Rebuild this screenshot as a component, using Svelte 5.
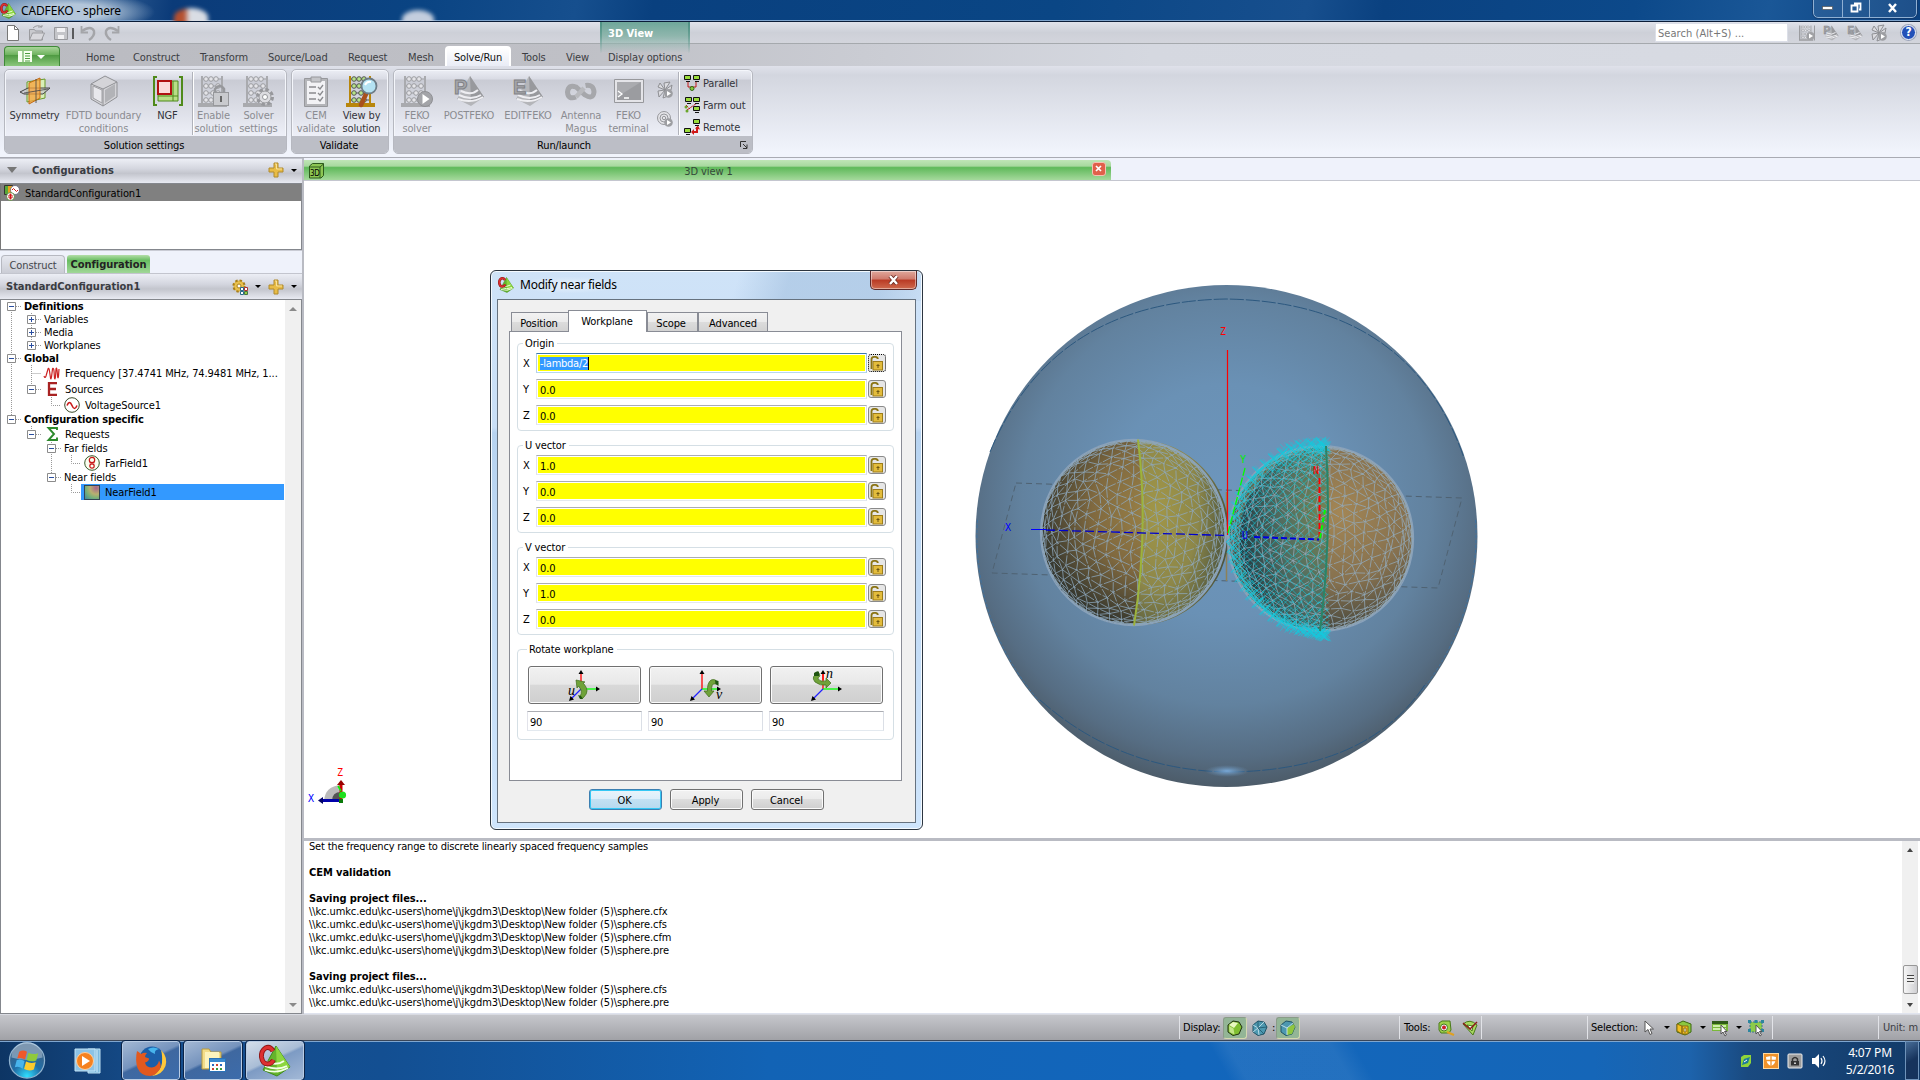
<script>
  const tabsLeft = ['Home', 'Construct', 'Transform', 'Source/Load', 'Request', 'Mesh'];
  const tabsRight = ['Tools', 'View', 'Display options'];

  const tree = [
    { t: 'Definitions', l: 0, b: true, e: '-' },
    { t: 'Variables', l: 1, e: '+' },
    { t: 'Media', l: 1, e: '+' },
    { t: 'Workplanes', l: 1, e: '+' },
    { t: 'Global', l: 0, b: true, e: '-' },
    { t: 'Frequency [37.4741 MHz, 74.9481 MHz, 1...', l: 1, i: 'freq' },
    { t: 'Sources', l: 1, e: '-', i: 'e' },
    { t: 'VoltageSource1', l: 2, i: 'volt' },
    { t: 'Configuration specific', l: 0, b: true, e: '-' },
    { t: 'Requests', l: 1, e: '-', i: 'sigma' },
    { t: 'Far fields', l: 2, e: '-' },
    { t: 'FarField1', l: 3, i: 'far' },
    { t: 'Near fields', l: 2, e: '-' },
    { t: 'NearField1', l: 3, i: 'near', sel: true }
  ];

  const groups = [
    { title: 'Origin', rows: [['X', '-lambda/2'], ['Y', '0.0'], ['Z', '0.0']] },
    { title: 'U vector', rows: [['X', '1.0'], ['Y', '0.0'], ['Z', '0.0']] },
    { title: 'V vector', rows: [['X', '0.0'], ['Y', '1.0'], ['Z', '0.0']] }
  ];

  const dir = '\\\\kc.umkc.edu\\kc-users\\home\\j\\jkgdm3\\Desktop\\New folder (5)\\sphere.';
  const log = [
    ['Set the frequency range to discrete linearly spaced frequency samples', 0],
    ['', 0],
    ['CEM validation', 1],
    ['', 0],
    ['Saving project files...', 1],
    [dir + 'cfx', 0],
    [dir + 'cfs', 0],
    [dir + 'cfm', 0],
    [dir + 'pre', 0],
    ['', 0],
    ['Saving project files...', 1],
    [dir + 'cfs', 0],
    [dir + 'pre', 0]
  ];

  // Geodesic wireframe: an icosahedron subdivided three times, front side only.
  function geodesic(cx, cy, r) {
    const p = (1 + Math.sqrt(5)) / 2;
    const unit = (v) => {
      const n = Math.hypot(v[0], v[1], v[2]);
      return [v[0] / n, v[1] / n, v[2] / n];
    };
    const V = [
      [-1, p, 0], [1, p, 0], [-1, -p, 0], [1, -p, 0], [0, -1, p], [0, 1, p],
      [0, -1, -p], [0, 1, -p], [p, 0, -1], [p, 0, 1], [-p, 0, -1], [-p, 0, 1]
    ].map(unit);
    let F = [
      [0, 11, 5], [0, 5, 1], [0, 1, 7], [0, 7, 10], [0, 10, 11], [1, 5, 9], [5, 11, 4], [11, 10, 2], [10, 7, 6], [7, 1, 8],
      [3, 9, 4], [3, 4, 2], [3, 2, 6], [3, 6, 8], [3, 8, 9], [4, 9, 5], [2, 4, 11], [6, 2, 10], [8, 6, 7], [9, 8, 1]
    ].map((f) => f.map((i) => V[i]));
    for (let s = 0; s < 3; s++) {
      const next = [];
      for (const [a, b, c] of F) {
        const m = (u, v) => unit([u[0] + v[0], u[1] + v[1], u[2] + v[2]]);
        const ab = m(a, b), bc = m(b, c), ca = m(c, a);
        next.push([a, ab, ca], [b, bc, ab], [c, ca, bc], [ab, bc, ca]);
      }
      F = next;
    }
    const turn = ([x, y, z]) => {
      const jx = 0.035 * Math.sin(41 * x + 17 * z + 9 * y), jy = 0.035 * Math.sin(37 * y + 23 * x);
      const x1 = x * Math.cos(0.4) + z * Math.sin(0.4), z1 = z * Math.cos(0.4) - x * Math.sin(0.4);
      const y2 = y * Math.cos(0.3) - z1 * Math.sin(0.3), z2 = z1 * Math.cos(0.3) + y * Math.sin(0.3);
      const k = Math.max(0, z2);
      return [x1 + jx * k, y2 + jy * k, z2];
    };
    let d = '';
    const seen = new Set();
    for (const f of F) {
      const q = f.map(turn);
      for (let i = 0; i < 3; i++) {
        const a = q[i], b = q[(i + 1) % 3];
        if (a[2] + b[2] < -0.35) continue;
        const A = `${(cx + a[0] * r).toFixed(1)} ${(cy + a[1] * r).toFixed(1)}`;
        const B = `${(cx + b[0] * r).toFixed(1)} ${(cy + b[1] * r).toFixed(1)}`;
        const key = A < B ? A + B : B + A;
        if (seen.has(key)) continue;
        seen.add(key);
        d += `M${A}L${B}`;
      }
    }
    return d;
  }

  // Near-field sample points: small diagonal crosses over one half sphere.
  function samples(cx, cy, r) {
    let d = '';
    for (let th = 3; th < 179; th += 6.2) {
      const t = (th * Math.PI) / 180;
      const step = Math.sin(t) > 0.4 ? 7.5 : 10;
      for (let ph = 2; ph <= 110; ph += step) {
        const q = (ph * Math.PI) / 180;
        const x = cx - r * Math.sin(t) * Math.sin(q);
        const y = cy - r * Math.cos(t) + 4 * Math.cos(q);
        d += `M${(x - 5).toFixed(1)} ${(y - 5).toFixed(1)}l10 10m0-10l-10 10`;
      }
    }
    // the pole caps lean away from the dividing plane
    for (const [y0, s] of [[cy - r - 1, 1], [cy + r + 1, -1]]) {
      for (let k = 0; k < 10; k++) {
        const x = cx - 42 + k * 4.6;
        const y = y0 + s * (Math.pow(Math.max(0, cx - x - 8) / 42, 2) * 10);
        d += `M${(x - 4).toFixed(1)} ${(y - 4).toFixed(1)}l8 8m0-8l-8 8`;
      }
    }
    return d;
  }

  const meshL = geodesic(1133.5, 532.5, 92.5);
  const meshR = geodesic(1320.5, 538.5, 92.5);
  const field = samples(1326, 537.5, 95);
</script>

{#snippet abacus(gold)}
  <g fill="none" stroke={gold ? '#b8860b' : '#a9aaae'} stroke-width="2">
    <path d="M4 1v27M24 1v27M1 29h27v2H1z" />
  </g>
  <g stroke={gold ? '#555' : '#9b9ca0'} fill={gold ? '#b6e388' : '#e4e4e8'}>
    <path d="M5 4h18M5 11h18M5 18h18M5 25h18" />
    <circle cx="8" cy="4" r="2.3" /><circle cx="13" cy="4" r="2.3" /><circle cx="18" cy="4" r="2.3" />
    <circle cx="8" cy="11" r="2.3" /><circle cx="13" cy="11" r="2.3" /><circle cx="20" cy="11" r="2.3" />
    <circle cx="8" cy="18" r="2.3" /><circle cx="15" cy="18" r="2.3" /><circle cx="20" cy="18" r="2.3" />
    <circle cx="8" cy="25" r="2.3" /><circle cx="13" cy="25" r="2.3" /><circle cx="18" cy="25" r="2.3" />
  </g>
{/snippet}

{#snippet pyramid(letter)}
  <path d="M17 1L31 22 18 31 4 24z" fill="#b4b5b9" />
  <path d="M17 1L31 22 18 27z" fill="#98999d" />
  <path d="M8 16q10 5 17-1M6 20q12 6 22 0M5 24q13 5 25-2" stroke="#eeeef2" stroke-width="2" fill="none" />
  <text x="1" y="18.500" font-size="20" font-weight="bold" font-family="Liberation Sans, sans-serif" fill="#a6a7ab" stroke="#808185">{letter}</text>
{/snippet}

{#snippet logo(cls)}
  <svg class={cls} viewBox="0 0 32 32">
    <path d="M17 1L31 22 18 31 4 25z" fill="#64b32c" stroke="#3f8a1a" />
    <path d="M17 1L31 22 18 28z" fill="#8cd63f" />
    <path d="M8 17q10 4 17-1M6 21q12 5 22 0M6 25q12 4 23-2" stroke="#f4ffe8" stroke-width="1.8" fill="none" />
    <path d="M14 6Q11 1 6.500 3Q2 6 2.500 12q1 7 6 7 4 0 6-4" fill="none" stroke="#8d1414" stroke-width="5" />
    <path d="M14 6Q11 1 6.500 3Q2 6 2.500 12q1 7 6 7 4 0 6-4" fill="none" stroke="#dc3030" stroke-width="3.200" />
  </svg>
{/snippet}

{#snippet fan()}
  <path d="M8 8L1 5l2-4zM8 8l-1-7 6-1zM8 8L1 9l1 6zM8 8l-2 8 5-2zM8 8l7-5-1 5z" fill="#dcdce0" stroke="#8e8f93" />
  <circle cx="11.500" cy="11.500" r="4.300" fill="#9d9ea2" /><path d="M10 9l4 2.500-4 2.500z" fill="#fff" />
{/snippet}

{#snippet plus()}
  <svg class="i16" viewBox="0 0 16 16"><path d="M6 1h4v5h5v4h-5v5H6v-5H1V6h5z" fill="#e8bc46" stroke="#b08a2c" /><path d="M7 2h1.500v5H14" stroke="#f9e29a" fill="none" /></svg>
{/snippet}

{#snippet computer(x, y)}
  <g transform="translate({x} {y})"><path d="M.5.500h6v4h-6z" fill="#9bdc3c" stroke="#111" /><path d="M2 6.500h4" stroke="#111" /></g>
{/snippet}

{#snippet lock()}
  <svg class="lock" viewBox="0 0 16 16">
    <path d="M2.500 14V4.500Q2.500 1.800 5 1.800h1.500Q8.800 2 8.800 4" fill="none" stroke="#8b7414" stroke-width="1.800" />
    <rect x="4" y="6.500" width="9.500" height="8.500" fill="#e3bc3c" stroke="#9c7c1a" /><path d="M9 9v4M7.500 10.500h3" stroke="#6d5610" />
  </svg>
{/snippet}

{#snippet rotator(which)}
  <svg class="rot" viewBox="0 0 34 34">
    <path d="M15 21V5" stroke="#f00" stroke-width="1.300" /><path d="M15 21H30" stroke="#0f0" stroke-width="1.300" /><path d="M15 21L5 31" stroke="#22f" stroke-width="1.300" />
    <path d="M12.500 6L15 2l2.500 4zM30 18.500l4 2.500-4 2.500zM3 33l1.500-5 3.500 3.500z" fill="#000" />
    {#if which === 'u'}
      <path d="M14 30q2 2 4-1 6-6 0-13l-1-1 2-1-9-2 1 8 1.500-2q5 6 1.500 10z" fill="#6fa23a" stroke="#3d6b1a" stroke-width=".7" />
      <path d="M12 27l3 1 2 3h-3z" fill="#1f5411" />
      <text x="2" y="27">u</text>
    {:else if which === 'v'}
      <path d="M31 16q-2-6-7-4-4 3-3.500 11H17l5 6 5-6h-2.500q0-8 3-7z" fill="#6fa23a" stroke="#3d6b1a" stroke-width=".7" />
      <path d="M28 12l3.500 1v5l-3-2z" fill="#1f5411" />
      <text x="29" y="31">v</text>
    {:else}
      <path d="M11 5Q2 8 7 14q5 4 11 3v3l5-5-5-5v3q-6 1-8-2 0-2 2-3z" fill="#6fa23a" stroke="#3d6b1a" stroke-width=".7" />
      <path d="M6 5q4-3 5-1v4H6z" fill="#1f5411" />
      <path d="M15 12V6" stroke="#f00" stroke-width="1.300" />
      <text x="18" y="10">n</text>
    {/if}
  </svg>
{/snippet}

<div class="screen">
  <div class="title">
    {@render logo('i16')}
    <span>CADFEKO - sphere</span>
    <i class="smudge one"></i><i class="smudge two"></i>
    <div class="winbtns">
      <b><svg width="12" height="6"><rect x=".5" y="1.500" width="10" height="3" fill="#fff" stroke="#555" stroke-width=".7" /></svg></b>
      <b><svg width="12" height="12"><path d="M4 1.500h6.500v6H9M1.500 3.500h6v6h-6z" fill="none" stroke="#fff" stroke-width="1.800" /></svg></b>
      <b class="x"><svg width="12" height="10"><path d="M2 1l7 8M9 1L2 9" stroke="#fff" stroke-width="2.400" /></svg></b>
    </div>
  </div>

  <div class="qat">
    <svg class="qicons" viewBox="0 0 122 20">
      <path d="M7.500 2.500h7l4 4v11h-11z" fill="#fff" stroke="#777" /><path d="M14.500 2.500v4h4" fill="none" stroke="#777" />
      <path d="M29.500 17V6.500h5l1 1.500h7v9z" fill="#c9cace" stroke="#9a9b9f" /><path d="M29.500 17l3-7h12l-3 7zM33 5q4-4 9-1v-2M42 4h-4" fill="#d8d8dc" stroke="#9a9b9f" />
      <path d="M54.500 4.500h13v12h-13z" fill="#c4c5c9" stroke="#98999d" /><path d="M57 5h8v4h-8zM58 12h6v4h-6z" fill="#f2f2f4" />
      <path d="M73 5v11" stroke="#333" stroke-width="1.500" />
      <path d="M82 8q9-6 12 0 1 5-5 9" fill="none" stroke="#a4a5a9" stroke-width="2.400" /><path d="M81.500 3v6.500h6.500" fill="none" stroke="#a4a5a9" stroke-width="1.800" />
      <path d="M118 8q-9-6-12 0-1 5 5 9" fill="none" stroke="#a4a5a9" stroke-width="2.400" /><path d="M118.500 3v6.500h-6.500" fill="none" stroke="#a4a5a9" stroke-width="1.800" />
    </svg>
    <div class="ctx">3D View</div>
    <div class="search">Search (Alt+S) ...</div>
    <div class="qright">
      <svg class="i16" viewBox="0 0 32 32">{@render abacus(false)}<path d="M1 1v30M31 1v30" stroke="#9b9ca0" stroke-width="2" /><circle cx="23" cy="22" r="8" fill="#a0a1a5" /><path d="M20 17l8 5-8 5z" fill="#fff" /></svg>
      <svg class="i16" viewBox="0 0 32 32">{@render pyramid('P')}</svg>
      <svg class="i16" viewBox="0 0 32 32">{@render pyramid('E')}</svg>
      <svg class="i16" viewBox="0 0 16 16">{@render fan()}</svg>
      <div class="help">?</div>
    </div>
  </div>

  <nav>
    <div class="file">
      <svg width="28" height="12" viewBox="0 0 28 12"><path d="M0 0h14v11H0z" fill="#f6fff0" /><path d="M5 0v11M7 2.500h5M7 5h5M7 7.500h5M7 10h5" stroke="#4d9b3f" /><path d="M19 4h8l-4 4z" fill="#fff" /></svg>
    </div>
    {#each tabsLeft as t}<span>{t}</span>{/each}
    <span class="active">Solve/Run</span>
    {#each tabsRight as t}<span>{t}</span>{/each}
  </nav>

  <div class="ribbon">
    <section class="g1">
      <div class="tools">
        <div class="tool on">
          <svg viewBox="0 0 32 32"><path d="M8 7l18-3v19L8 27z" fill="#d9efb8" stroke="#6a9a2a" /><path d="M1 17l8-4h22l-7 6H5z" fill="#c8c8cc" fill-opacity=".7" stroke="#444" /><path d="M10 8l11-5v20l-11 6z" fill="#f7a23a" fill-opacity=".75" stroke="#c46a10" /><path d="M17 4v24M5 18l24-4" stroke="#444" stroke-width=".8" /></svg>
          Symmetry
        </div>
        <div class="tool">
          <svg viewBox="0 0 32 32"><path d="M3 9L17 1l12 6v15L15 31 3 24z" fill="#d4d4d8" stroke="#8f9094" /><path d="M3 9l12 5 14-7M15 14v17" fill="none" stroke="#8f9094" /><path d="M5 11l9 4v13l-9-5z" fill="#e8e8ec" stroke="#a0a0a4" /><path d="M17 15l10-6v12l-10 7z" fill="#b2b3b7" /></svg>
          FDTD boundary<br />conditions
        </div>
        <div class="tool on">
          <svg viewBox="0 0 32 32"><path d="M5 2H2v28h3M27 2h3v28h-3" fill="none" stroke="#4f8a1a" stroke-width="2" /><path d="M6 6h20v20H6z" fill="#b8dd86" stroke="#4f8a1a" /><path d="M21 6v20M6 21h20" stroke="#4f8a1a" /><path d="M6 6h13v13H6z" fill="#fbdada" stroke="#b01010" stroke-width="2" /></svg>
          NGF
        </div>
        <hr />
        <div class="tool">
          <svg viewBox="0 0 32 32">{@render abacus(false)}<path d="M17 18v-4q5-6 9 0v4" fill="none" stroke="#97989c" stroke-width="2.500" /><rect x="15.500" y="17.500" width="15" height="13" fill="#c9cace" stroke="#97989c" /><path d="M23 21v6" stroke="#666" stroke-width="2" /></svg>
          Enable<br />solution
        </div>
        <div class="tool">
          <svg viewBox="0 0 32 32">{@render abacus(false)}<circle cx="22" cy="22" r="7.500" fill="#e0e0e4" stroke="#97989c" stroke-width="3" stroke-dasharray="3.500 2.400" /><circle cx="22" cy="22" r="6" fill="#dcdce0" stroke="#97989c" /><circle cx="22" cy="22" r="2.500" fill="#fff" stroke="#97989c" /></svg>
          Solver<br />settings
        </div>
      </div>
      <footer>Solution settings</footer>
    </section>

    <section class="g2">
      <div class="tools">
        <div class="tool">
          <svg viewBox="0 0 32 32"><path d="M4.500 3.500h23v28h-23z" fill="#b4b5b9" stroke="#97989c" /><path d="M7 6h18v23H7z" fill="#f2f2f5" /><path d="M11 2h10v5H11z" fill="#c4c5c9" stroke="#97989c" /><path d="M9 12h7M9 18h7M9 24h7M18 12l2 2 3-4M18 18l2 2 3-4M18 24l2 2 3-4" fill="none" stroke="#8a8b8f" stroke-width="1.300" /></svg>
          CEM<br />validate
        </div>
        <div class="tool on">
          <svg viewBox="0 0 32 32">{@render abacus(true)}<path d="M20 19l-5 11" stroke="#a8501c" stroke-width="4.500" stroke-linecap="round" /><circle cx="23" cy="11" r="7.500" fill="#b4e2f2" stroke="#6d7c86" stroke-width="1.800" /><path d="M19 10q2-4 6-3" stroke="#fff" stroke-width="2" fill="none" /></svg>
          View by<br />solution
        </div>
      </div>
      <footer>Validate</footer>
    </section>

    <section class="g3">
      <div class="tools">
        <div class="tool">
          <svg viewBox="0 0 32 32">{@render abacus(false)}<circle cx="24" cy="24" r="7.500" fill="#a3a4a8" stroke="#8f9094" /><path d="M21.500 19l7 5-7 5z" fill="#fff" /></svg>
          FEKO<br />solver
        </div>
        <div class="tool"><svg viewBox="0 0 32 32">{@render pyramid('P')}</svg>POSTFEKO</div>
        <div class="tool"><svg viewBox="0 0 32 32">{@render pyramid('E')}</svg>EDITFEKO</div>
        <div class="tool">
          <svg viewBox="0 0 32 32"><path d="M11 22Q3 25 2.500 17q1-8 8.500-5l9 8q8 5 9-3-.5-8-8.500-6.500" fill="none" stroke="#a6a7ab" stroke-width="5" /><path d="M11 22l8-9" stroke="#b9babe" stroke-width="4.500" /></svg>
          Antenna<br />Magus
        </div>
        <div class="tool">
          <svg viewBox="0 0 32 32"><path d="M1.500 4.500h29v23h-29z" fill="#e4e4e8" stroke="#97989c" /><path d="M4 7h24v18H4z" fill="#9b9ca0" /><path d="M4 7h24L4 22z" fill="#aaabaf" /><path d="M5 16l4 3-4 3M11 23h5" fill="none" stroke="#fff" stroke-width="1.300" /></svg>
          FEKO<br />terminal
        </div>
        <div class="minis">
          <svg class="i16" viewBox="0 0 16 16">{@render fan()}</svg>
          <svg class="i16" viewBox="0 0 16 16"><circle cx="7" cy="7" r="6.500" fill="#e4e4e8" stroke="#97989c" /><circle cx="7" cy="7" r="4" fill="none" stroke="#97989c" /><circle cx="7" cy="7" r="1.700" fill="none" stroke="#97989c" /><circle cx="11.500" cy="11.500" r="4.300" fill="#9d9ea2" /><path d="M10 9l4 2.500-4 2.500z" fill="#fff" /></svg>
        </div>
        <hr />
        <div class="launch">
          <div><svg class="i16" viewBox="0 0 16 16">{@render computer(0, 0)}{@render computer(9, 0)}<path d="M4 7v5h8V7" fill="none" stroke="#c01818" /><circle cx="8" cy="13.500" r="2" fill="#8bc540" stroke="#2f6b10" /></svg>Parallel</div>
          <div><svg class="i16" viewBox="0 0 16 16"><path d="M3 13L13 6M2 8l4 4" stroke="#c01818" stroke-dasharray="3 1" />{@render computer(1, 0)}{@render computer(9, 0)}{@render computer(9, 9)}<circle cx="2" cy="10" r="1.500" fill="#6aa52a" /><circle cx="3" cy="14" r="1.500" fill="#6aa52a" /></svg>Farm out</div>
          <div><svg class="i16" viewBox="0 0 16 16">{@render computer(9, 0)}{@render computer(0, 9)}<path d="M13 8v5H9" fill="none" stroke="#d01818" stroke-width="2" /><path d="M11 9.500l3-3 2 4zM10 10v6l-3-3z" fill="#d01818" /></svg>Remote</div>
        </div>
      </div>
      <footer>Run/launch<svg class="dlg" viewBox="0 0 8 8"><path d="M.5 6V.5H6M3 3l4 4M7 3.500V7.500H3" fill="none" stroke="#333" /></svg></footer>
    </section>
  </div>

  <main>
    <aside>
      <header class="h1"><i class="down"></i><b>Configurations</b><span class="acts">{@render plus()}<i class="dd"></i></span></header>
      <div class="list">
        <div class="cfg">
          <svg class="i16" viewBox="0 0 16 16"><path d="M.5.500h8v9h-8z" fill="#e8a020" stroke="#333" /><path d="M1 1h3v8H1z" fill="#58a838" /><circle cx="11" cy="5" r="4.500" fill="#fff" stroke="#446" stroke-width=".6" /><path d="M8 5q1.500-3 3 0t3 0" fill="none" stroke="#d01818" /><circle cx="6.500" cy="11.500" r="4" fill="#fff" stroke="#4a7a2a" stroke-width=".8" /><path d="M6.500 8.500v6M5 10h3v3H5z" stroke="#d01818" fill="none" /></svg>
          <span>StandardConfiguration1</span>
        </div>
      </div>
      <div class="ptabs"><span>Construct</span><b>Configuration</b></div>
      <header class="h2"><b>StandardConfiguration1</b>
        <span class="acts">
          <svg class="i16" viewBox="0 0 16 16"><circle cx="7" cy="7" r="5.500" fill="#e2b53c" stroke="#a87f1c" stroke-width="2.200" stroke-dasharray="2.400 1.900" /><circle cx="7" cy="7" r="4.500" fill="#e8c04c" /><circle cx="7" cy="7" r="2" fill="#fff" stroke="#a87f1c" /><path d="M8.500 8.500h3v3h-3z" fill="#fff" stroke="#2a6a8a" /><path d="M12.500 8.500h3v3h-3z" fill="#fff" stroke="#b03030" /><path d="M12.500 12.500h3v3h-3z" fill="#9c4" stroke="#474" /><path d="M8.500 12.500h3v3h-3z" fill="#fff" stroke="#2a6a8a" /></svg>
          <i class="dd"></i>{@render plus()}<i class="dd"></i>
        </span>
      </header>
      <div class="tree">
        <div class="rows">
          <svg class="wires" viewBox="0 0 284 202"><path d="M11.500 6v114M16 6.500h6M31.500 13v32M36 19.500h5M36 32.500h5M36 45.500h5M16 58.500h6M31.500 65v24M31.500 73.500h9M36 89.500h5M51.500 97v8.500h9M16 119.500h6M31.500 126v8M36 134.500h5M51.500 142v35M56 148.500h5M71.500 155v8.500h9M56 177.500h5M71.500 184v8.500h9" fill="none" stroke="#999" stroke-dasharray="1 1" /></svg>
          {#each tree as r}
            <div class="row l{r.l}" class:icon={r.i} class:bold={r.b} class:noexp={!r.e}>
              {#if r.e}<svg class="exp" viewBox="0 0 9 9"><path d="M.5.500h8v8h-8z" fill="#fff" stroke="#8b8b8b" /><path d={r.e === '+' ? 'M2 4.500h5M4.500 2v5' : 'M2 4.500h5'} stroke="#2a4ea0" /></svg>{/if}
              <div class="lab" class:sel={r.sel}>
                {#if r.i === 'freq'}<svg class="i16" viewBox="0 0 16 16"><path d="M0 11q1 3 2 0l2-7q1-2 1.500 2l1 7q.5 2 1-1l1-8q1-2 1.500 2l.5 7q.5 2 1-1l.500-8q.5-2 1 1l.7 7q.5 2 .8-1l.5-7" fill="none" stroke="#c22" stroke-width="1.200" /></svg>
                {:else if r.i === 'e'}<svg class="i16" viewBox="0 0 16 16"><path d="M13 2.200H5v11.600h8M5 8h7" fill="none" stroke="#a82222" stroke-width="2.300" /></svg>
                {:else if r.i === 'volt'}<svg class="i16" viewBox="0 0 16 16"><circle cx="8" cy="8" r="7.300" fill="#fff" stroke="#3a4a2a" /><path d="M3 8.500q2.500-6 5 0t5 0" fill="none" stroke="#c81818" stroke-width="1.600" /></svg>
                {:else if r.i === 'sigma'}<svg class="i16" viewBox="0 0 16 16"><path d="M13 4V2H4.500L10 8l-5.500 6H13v-2.500" fill="none" stroke="#2c8a2c" stroke-width="1.900" /></svg>
                {:else if r.i === 'far'}<svg class="i16" viewBox="0 0 16 16"><circle cx="8" cy="8" r="7.300" fill="#fbfff0" stroke="#3a5a2a" /><circle cx="8" cy="5" r="2.700" fill="none" stroke="#c81818" stroke-width="1.200" /><circle cx="8" cy="11" r="2.200" fill="none" stroke="#c81818" stroke-width="1.200" /><path d="M5.500 7.800h5" stroke="#c81818" /></svg>
                {:else if r.i === 'near'}<i class="nf"></i>{/if}
                <span>{r.t}</span>
              </div>
            </div>
          {/each}
        </div>
        <div class="sb"><i class="up"></i><i class="dn"></i></div>
      </div>
    </aside>

    <div class="right">
      <div class="vtabrow">
        <div class="vtab">
          <svg class="i3d" viewBox="0 0 17 17"><path d="M1.500 4l3-2.500h11v12L13 16H1.500z" fill="#8cc653" stroke="#2d5a1d" /><path d="M1.500 5H12v11M12 5l3.500-3" fill="none" stroke="#2d5a1d" /><text x="2" y="14" font-size="8">3D</text></svg>
          <span>3D view 1</span>
          <em><svg width="9" height="9"><path d="M2 2l5 5M7 2L2 7" stroke="#fff" stroke-width="1.700" /></svg></em>
        </div>
      </div>

      <svg class="view" viewBox="304 181 1616 657">
        <defs>
          <radialGradient id="big" cx=".5" cy=".43" r=".58"><stop offset="0" stop-color="#6d96bd" /><stop offset=".4" stop-color="#6a91b5" /><stop offset=".7" stop-color="#62829f" /><stop offset=".88" stop-color="#566d83" /><stop offset="1" stop-color="#4b5965" /></radialGradient>
          <radialGradient id="sl" cx=".62" cy=".38" r=".68"><stop offset="0" stop-color="#9c8347" /><stop offset=".5" stop-color="#80693f" /><stop offset="1" stop-color="#2b302c" /></radialGradient>
          <radialGradient id="sy" cx=".25" cy=".38" r=".85"><stop offset="0" stop-color="#a19648" /><stop offset=".5" stop-color="#8d8749" /><stop offset="1" stop-color="#39453a" /></radialGradient>
          <radialGradient id="sr" cx=".6" cy=".36" r=".68"><stop offset="0" stop-color="#a38655" /><stop offset=".55" stop-color="#86714f" /><stop offset="1" stop-color="#3d423c" /></radialGradient>
          <radialGradient id="st" cx=".95" cy=".35" r=".95"><stop offset="0" stop-color="#738254" /><stop offset=".5" stop-color="#526d60" /><stop offset="1" stop-color="#253d45" /></radialGradient>
          <radialGradient id="spot"><stop offset="0" stop-color="#79a9d8" /><stop offset="1" stop-color="#6a90b5" stop-opacity="0" /></radialGradient>
        </defs>
        <circle cx="1226.500" cy="536" r="251" fill="url(#big)" />
        <path d="M977.500 520A249.500 249.500 0 0 0 1040 702M1475.500 520A249.500 249.500 0 0 1 1420 693" fill="none" stroke="#3d73a3" stroke-dasharray="3 2" />
        <path d="M990 452Q1052 302 1226 299Q1410 302 1464 458M1040 700Q1120 771 1230 772Q1370 770 1426 683" fill="none" stroke="#2c587f" stroke-dasharray="14 2" />
        <ellipse cx="1227" cy="771" rx="22" ry="6" fill="url(#spot)" />
        <path d="M1016 483L1462 498 1438 588 992 573z" fill="none" stroke="#4f6272" stroke-dasharray="6 4" />
        <path d="M1226.500 492V581" stroke="#8d8159" stroke-width="1.500" />

        <circle cx="1133.500" cy="532.500" r="93" fill="url(#sl)" />
        <path d="M1138 439.500Q1149 530 1134 625.500A93 93 0 0 0 1138 439.500z" fill="url(#sy)" />
        <path d={meshL} fill="none" stroke="#8ea8bd" stroke-width=".9" stroke-dasharray="10 1.500" opacity=".85" />
        <circle cx="1133.500" cy="532.500" r="93" fill="none" stroke="#8aa2bb" stroke-width="1.300" />
        <path d="M1138 439.500Q1149 530 1134 625.500" fill="none" stroke="#9cb33c" stroke-width="2" />

        <circle cx="1320.500" cy="538.500" r="93" fill="url(#sr)" />
        <path d="M1326 446Q1332 540 1320 631A93 93 0 0 1 1326 446z" fill="url(#st)" />
        <path d={meshR} fill="none" stroke="#92a9bb" stroke-width=".9" stroke-dasharray="10 1.500" opacity=".85" />
        <circle cx="1320.500" cy="538.500" r="93" fill="none" stroke="#8aa2bb" stroke-width="1.300" />
        <path d={field} fill="none" stroke="#16c8dc" stroke-width=".8" opacity=".75" />
        <path d="M1326 446Q1332 540 1320 631" fill="none" stroke="#2a8468" stroke-width="2" />

        <path d="M1227.500 350V535" stroke="#f00" stroke-width="1.200" />
        <path d="M1031 529.500H1046" stroke="#00f" /><path d="M1046 530L1227 535.500" stroke="#00c" stroke-width="1.300" stroke-dasharray="9 4" />
        <path d="M1245 468L1228 533" stroke="#0f0" stroke-width="1.300" stroke-dasharray="8 2" />
        <path d="M1254 537L1319 539.500" stroke="#00d" stroke-width="2" stroke-dasharray="6 3" />
        <path d="M1319.500 478V537" stroke="#f00" stroke-width="2" stroke-dasharray="6 3" />
        <path d="M1320 538L1325 510" stroke="#0f0" stroke-width="2" stroke-dasharray="5 3" />
        <g class="ax">
          <text x="1220" y="335" fill="#f00">Z</text><text x="1005" y="531" fill="#00f">X</text>
          <text x="1240" y="463" fill="#0e0">Y</text><text x="1313" y="474" fill="#f00">N</text><text x="1242" y="539" fill="#00e">U</text>
          <text x="337" y="776" fill="#f00">Z</text><text x="308" y="802" fill="#00f">X</text>
        </g>
        <path d="M324 801Q325 786 341 785V801z" fill="#bbb" /><path d="M332 801q0-9 9-9v9z" fill="#555" />
        <path d="M341 800V784" stroke="#c00" stroke-width="3" /><path d="M337 785l4-5 4 5z" fill="#900" />
        <path d="M341 800.500H323" stroke="#00a" stroke-width="3" /><path d="M323 797v7l-5-3.500z" fill="#006" />
        <circle cx="342.500" cy="795" r="3.600" fill="#1de01d" /><path d="M339 799h4v4h-4z" fill="#0a7a0a" /><path d="M338 786l3 5" stroke="#0f0" stroke-width="1.500" />
      </svg>

      <div class="log">
        <div class="lines">{#each log as [t, b]}<div class:bold={b}>{t}</div>{/each}</div>
        <div class="sb"><i class="up dark"></i><div class="thumb"></div><i class="dn dark"></i></div>
      </div>
    </div>
  </main>

  <div class="status">
    <div class="s1"><span>Display:</span>
      <b class="tog"><svg class="i16" viewBox="0 0 16 16"><path d="M1 5l5-4 6 1 3 5-3 7-6 1.500L1 12z" fill="#7fbe30" stroke="#223311" /><path d="M2 5l4-3 5 1-4 5z" fill="#e8f8c0" /><path d="M2 6l4.500 2.500 1 6-5-2.500z" fill="#c2e687" /></svg></b>
      <b><svg class="i16" viewBox="0 0 16 16"><path d="M1 5l5-4 6 1 3 5-3 7-6 1.500L1 12z" fill="#4d98b0" stroke="#205468" /><path d="M1 5l5 3 6-6M6 8l1 7M1 12l5-4" fill="none" stroke="#cfe8f0" stroke-width=".8" /><path d="M6 8l9-1M6 1v7l6 6" fill="none" stroke="#205468" stroke-width=".8" /></svg></b>
      <em>:</em>
      <b class="tog"><svg class="i16" viewBox="0 0 16 16"><path d="M1 5l5-4 6 1 3 5-3 7-6 1.500L1 12z" fill="#4d98b0" stroke="#205468" /><path d="M7 8l7-4 1 3-3 7-5 1z" fill="#8fc63f" /><path d="M1 5l6 3 6-5M7 8v7" fill="none" stroke="#d8eef6" stroke-width=".8" /></svg></b>
    </div>
    <div class="s2"><span>Tools:</span>
      <svg class="i16" viewBox="0 0 16 16"><path d="M1 3l3-2h8l1 9-2 3H3l-2-3z" fill="#9cd04a" stroke="#4a7a1a" /><circle cx="6" cy="7.500" r="3.500" fill="#eef" stroke="#4a7a1a" /><circle cx="6" cy="7.500" r="2" fill="#c22" /><path d="M9 12l7 3" stroke="#e0a020" stroke-width="2" /></svg>
      <svg class="i16" viewBox="0 0 16 16"><path d="M1 4q7-6 14 1l-4 10z" fill="#a8d860" stroke="#4a7a1a" /><path d="M5 5l6 1-1 5z" fill="#fff" stroke="#4a7a1a" /><path d="M1 3l7 6 7-7" fill="none" stroke="#8b1a1a" stroke-width="1.500" /></svg>
    </div>
    <div class="s3"></div>
    <div class="s4"><span>Selection:</span>
      <svg class="i16" viewBox="0 0 16 16"><path d="M5 1v11l3-2.500 2 5 2-1-2-4.500h3.500z" fill="#fff" stroke="#555" /></svg><i class="dd"></i>
      <svg class="i16" viewBox="0 0 16 16"><path d="M1 4l6-3 8 3v8l-6 3-8-3z" fill="#8cc63f" stroke="#3d6b10" /><path d="M1 4l5 2v8l-5-3zM6 6h6v8H6z" fill="#f0c020" stroke="#8b6a10" /><path d="M8 8h2v4H8z" fill="#fff" stroke="#8b6a10" /></svg><i class="dd"></i>
      <svg class="i16" viewBox="0 0 16 16"><path d="M0 1h16v10H0z" fill="#7ab83a" /><path d="M0 1h16v3H0z" fill="#2f5a18" /><path d="M1 6h13M1 9h13" stroke="#eaffd0" stroke-width="1.400" /><path d="M9 5v9l2-2 2 4 1.500-1-2-3.500H15z" fill="#fff" stroke="#555" /></svg><i class="dd"></i>
      <svg class="i16" viewBox="0 0 16 16"><path d="M2 2h12v10H2z" fill="#8ccc4a" stroke="#3a7a8a" stroke-dasharray="2 1" /><path d="M0 0h3v3H0zM6.500 0h3v3h-3zM13 0h3v3h-3zM0 9h3v3H0zM13 9h3v3h-3z" fill="#2c86a0" /><path d="M8 5v9l2-2 2 4 1.500-1-2-3.500H14z" fill="#fff" stroke="#555" /></svg>
    </div>
    <div class="s5"></div>
    <div class="s6">Unit: m</div>
  </div>

  <div class="taskbar">
    <svg class="orb" viewBox="0 0 40 40">
      <defs><radialGradient id="orbg" cx=".5" cy=".95" r=".8"><stop offset="0" stop-color="#2fe0ff" /><stop offset=".5" stop-color="#1f6ea8" /><stop offset="1" stop-color="#3c6186" /></radialGradient></defs>
      <circle cx="20" cy="20" r="18" fill="url(#orbg)" stroke="#8fb2cf" stroke-width="1.300" />
      <path d="M4 17a16 16 0 0 1 32 0q-16 5-32 0z" fill="#dfe9f2" opacity=".4" />
      <path d="M12 11q4-2.500 8 0l-2 8q-4-2.500-8-1z" fill="#f0592a" /><path d="M21.500 12q4.500 2.500 10 .5l-2 7.500q-5 2-10-.5z" fill="#8fc93c" />
      <path d="M9.500 19.500q4-1.500 8 1l-2 8q-4-3-8-1.500z" fill="#48b4ec" /><path d="M19 21q4.500 2.500 10 .8l-2 7.500q-5 2-10-.5z" fill="#fccb2e" />
    </svg>
    <svg class="wmp" viewBox="0 0 28 28"><path d="M14 2h12v24H14z" fill="#7db9de" stroke="#bfe2f4" /><path d="M23 3v22" stroke="#d7effb" /><path d="M1 2h20v22H1z" fill="#8cc3e6" stroke="#c4e4f6" /><circle cx="11" cy="14" r="8.500" fill="#f58220" stroke="#ffd0a0" /><path d="M8 9l8 5-8 5z" fill="#fff" /></svg>
    <div class="tb">
      <svg viewBox="0 0 32 32">
        <circle cx="17" cy="14" r="12.500" fill="#1c5ea8" /><path d="M13 4q5-3 11 0-5 1-4 5-5-2-7-5z" fill="#48b4ec" />
        <path d="M26 5q7 7 4.500 16Q27 30 17 31q9-5 10-13 .5-8-1-13z" fill="#ffc83a" />
        <path d="M2 6q2 1 4 3 3-2 6-1-2 2-2 4l4 1.500q0 3-4 4 1 5 7 5 6-1 7-7 4 6-1 11-3 4-8 4.500Q6 31 2.500 23 0 15 2 6z" fill="#e2591f" />
      </svg>
    </div>
    <div class="tb">
      <svg viewBox="0 0 32 32"><path d="M5 4h7l2 3h10v17H5z" fill="#f3dd8a" stroke="#b89a3c" /><path d="M8 7h14v16H8z" fill="#fdf3bd" /><rect x="12.500" y="13.500" width="16" height="13" fill="#fff" stroke="#2a72b8" /><path d="M13 14h15v3H13z" fill="#3a8ad0" /><path d="M15 19h2v2h-2zM23 19h2v2h-2z" fill="#2a6ac0" /><path d="M19 19h2v2h-2zM15 23h2v2h-2z" fill="#d04030" /><path d="M19 23h2v2h-2zM23 23h2v2h-2z" fill="#3a9a3a" /></svg>
    </div>
    <div class="tb cur">{@render logo('biglogo')}</div>
    <div class="tray">
      <svg class="i16" viewBox="0 0 16 16"><path d="M3 4l3-2h7v8l-3 4H3z" fill="#8fd43a" /><path d="M4 12l2-6 6-2-2 6z" fill="#1a7a9a" /><path d="M6 9l3-2" stroke="#fff" /></svg>
      <svg class="i16" viewBox="0 0 16 16"><rect x=".5" y=".5" width="15" height="15" fill="#f0922a" stroke="#ffd9a0" /><path d="M8 3l5 1q0 7-5 9-5-2-5-9z" fill="#fff" /><path d="M8 3v10M3 7.500h10" stroke="#f0922a" stroke-width="1.300" /></svg>
      <svg class="i16" viewBox="0 0 16 16"><rect x="1" y="1" width="14" height="14" rx="1" fill="#9c9c9c" stroke="#eee" /><path d="M5.500 8V6q2.500-3 5 0v2" fill="none" stroke="#333" stroke-width="1.500" /><path d="M4 8h8v4.500H4z" fill="#333" /><path d="M7 9.500h2v1.500H7z" fill="#ccc" /></svg>
      <svg class="i16" viewBox="0 0 16 16"><path d="M1 5h3l4-4v14l-4-4H1z" fill="#fff" /><path d="M10 5q2 3 0 6M12 3q4 5 0 10" fill="none" stroke="#fff" stroke-width="1.200" /></svg>
    </div>
    <div class="clock">4:07 PM<br />5/2/2016</div>
    <div class="peek"></div>
  </div>

  <div class="dialog">
    <div class="dtitle">{@render logo('i16')}<span>Modify near fields</span>
      <b><svg width="12" height="10"><path d="M2 1l7 8M9 1L2 9" stroke="#6b2a22" stroke-width="4" /><path d="M2 1l7 8M9 1L2 9" stroke="#fff" stroke-width="2.400" /></svg></b>
    </div>
    <div class="client">
      <div class="dtabs"><span>Position</span><span class="cur">Workplane</span><span>Scope</span><span>Advanced</span></div>
      <div class="pane">
        {#each groups as g, gi}
          <div class="grp">
            <div class="leg">{g.title}</div>
            {#each g.rows as [k, v], ri}
              <div class="frow"><label>{k}</label>
                <div class="inp" class:focus={gi === 0 && ri === 0}><span>{v}</span></div>
                <div class="lk" class:dot={gi === 0 && ri === 0}>{@render lock()}</div>
              </div>
            {/each}
          </div>
        {/each}
        <div class="grp rotg">
          <div class="leg">Rotate workplane</div>
          <div class="three">
            {#each ['u', 'v', 'n'] as a}
              <div><div class="rb">{@render rotator(a)}</div><div class="ri">90</div></div>
            {/each}
          </div>
        </div>
      </div>
      <div class="btns"><div class="def">OK</div><div>Apply</div><div>Cancel</div></div>
    </div>
  </div>
</div>

<style>
  :global(body) { margin: 0; overflow: hidden; }
  .screen {
    position: relative; width: 1920px; height: 1080px; display: flex; flex-direction: column; overflow: hidden;
    font: 11px/13px 'DejaVu Sans Condensed', 'DejaVu Sans', sans-serif; font-stretch: condensed; letter-spacing: -0.3px;
    color: #000; background: #fff; white-space: nowrap;
  }
  .screen * { box-sizing: border-box; }
  .screen :global(.i16) { width: 16px; height: 16px; flex: none; display: block; overflow: visible; }
  i, em { font-style: normal; }

  .title {
    height: 22px; flex: none; display: flex; align-items: center; position: relative; gap: 5px; overflow: hidden;
    font: 12px/16px 'Noto Sans', sans-serif; letter-spacing: -0.15px; border-bottom: 1px solid #0a1c38; box-shadow: inset 0 -1px #7da3cc;
    background: radial-gradient(ellipse 85px 20px at 70px 12px, #b3c6da 40%, #b3c6da00 100%),
      linear-gradient(100deg, #6d93b9 0, #0b3b79 9%, #0a4483 22%, #164f8e 30%, #09407f 34%, #0a4685 55%, #174f8e 68%, #0a4180 72%, #0c498a 85%, #1a5797 92%, #0a4180);
  }
  .smudge { position: absolute; border-radius: 50% 50% 0 0; filter: blur(2px); height: 18px; top: 8px; }
  .smudge.one { left: 174px; width: 34px; background: linear-gradient(90deg, #b5502f 30%, #d9dde4 45%); }
  .smudge.two { left: 402px; width: 32px; top: 10px; background: #c3cede; }
  .winbtns { position: absolute; right: 3px; top: -2px; height: 20px; display: flex; border: 1px solid #8fb0d3; border-radius: 0 0 5px 5px; outline: 1px solid #14335e88; }
  .winbtns b { width: 29px; display: grid; place-items: center; border-right: 1px solid #8fb0d3; background: #ffffff14; }
  .winbtns b + b { width: 27px; }
  .winbtns b.x { width: 46px; border: 0; }

  .qat { height: 22px; flex: none; display: flex; align-items: center; background: linear-gradient(#e0e2ea, #cdd0d8 50%, #d3d5dc); border-bottom: 1px solid #a5a9ad; position: relative; }
  .qicons { width: 122px; height: 20px; flex: none; }
  .ctx { position: absolute; left: 600px; top: 0; width: 90px; height: 31px; padding: 5px 0 0 6px; color: #fff; font-weight: bold; letter-spacing: 0; background: linear-gradient(#6fa79a, #8fb6ad 45%, #c5c8cc00); border: solid #4e9184; border-width: 0 2px; border-image: linear-gradient(#4e9184, #4e918400) 1; }
  .search { margin-left: auto; width: 133px; height: 19px; background: #fff; border: 1px solid #dcdfe8; padding: 3px 2px; color: #777; letter-spacing: 0.05px; }
  .qright { display: flex; align-items: center; gap: 8px; margin: 0 4px 0 11px; }
  .help { width: 15px; height: 15px; border-radius: 50%; margin-left: 6px; background: #2250b8; border: 1px solid #f4f6fc; box-shadow: 0 0 0 1px #9ba4ba; color: #fff; font-weight: bold; text-align: center; font-size: 12px; }

  nav { height: 22px; flex: none; display: grid; grid-template-columns: 82px 47px 67px 68px 80px 60px 37px 77px 44px 42px 1fr; align-items: end; padding-left: 4px; color: #3b3d42; background: linear-gradient(90deg, #babbc1, #bfc0c6 30%, #d5d8e0 60%, #d8dbe3); }
  nav span { height: 15px; letter-spacing: -0.12px; }
  .file { width: 56px; height: 20px; border: 1px solid #3f8a38; border-bottom: 0; border-radius: 4px 4px 0 0; display: grid; place-items: center; background: linear-gradient(#a9d59a, #6fb35f 40%, #4d9940 42%, #8bc77c); }
  nav .active { width: 66px; height: 20px; padding-top: 3px; text-align: center; border-radius: 4px 4px 0 0; background: linear-gradient(#fff, #e9ecf6); color: #111; border: 2px solid #fff; border-bottom: 0; line-height: 13px; }

  .ribbon { height: 92px; flex: none; display: flex; gap: 4px; padding: 3px 4px 4px; background: linear-gradient(#dfe1ea, #d3d6df 10%, #f1f4fc 95%); border-bottom: 1px solid #a9abb3; }
  .ribbon section { height: 85px; border: 1px solid #b6b8c0; border-radius: 5px; overflow: hidden; display: flex; flex-direction: column; background: linear-gradient(#eceef5, #d9dbe4 11%, #c9cbd4 12%, #eef0f8 80%); box-shadow: inset 0 0 0 1px #f4f6fb; }
  .g1 { width: 283px; } .g2 { width: 98px; } .g3 { width: 360px; }
  .tools { height: 68px; display: grid; align-items: start; padding-top: 6px; color: #8b8c91; }
  .g1 .tools { grid-template-columns: 59px 79px 49px 2px 39px 51px; }
  .g2 .tools { grid-template-columns: 48px 43px; }
  .g3 .tools { grid-template-columns: 46px 58px 60px 46px 49px 25px 3px 70px; }
  .tool { text-align: center; display: block; letter-spacing: -0.15px; }
  .tool.on { color: #33343a; }
  .tool svg { width: 32px; height: 32px; display: block; margin: -1px auto 2px; overflow: visible; }
  .tools hr { width: 2px; height: 63px; margin: -4px 0 0; border: 0; background: linear-gradient(90deg, #b0b2ba 50%, #fff 50%); }
  .ribbon footer { height: 17px; background: #bcbec6; text-align: center; color: #000; padding-top: 3px; position: relative; letter-spacing: -0.15px; line-height: 14px; }
  .g3 footer { padding-right: 18px; } .g1 footer { padding-right: 3px; } .g2 footer { padding-right: 2px; }
  .dlg { position: absolute; right: 4px; top: 5px; width: 8px; height: 8px; }
  .minis { display: grid; gap: 13px; padding: 6px 4px; }
  .launch { display: grid; gap: 6px; padding-left: 3px; color: #33343a; margin-top: -1px; }
  .launch div { display: flex; align-items: center; gap: 3px; letter-spacing: -0.15px; }

  main { height: 856px; flex: none; display: flex; }
  aside { width: 303px; flex: none; display: flex; flex-direction: column; background: #eff2fb; border-right: 1px solid #b9bbc3; }
  aside header { flex: none; display: flex; align-items: center; background: linear-gradient(#eceef5, #d4d6df 40%, #c3c5cd 60%, #e8eaf2); color: #3a3c42; border-top: 1px solid #c3c5ce; letter-spacing: 0; }
  .h1 { height: 25px; padding: 0 0 2px 7px; gap: 15px; }
  .h2 { height: 26px; padding-left: 6px; }
  .down { border: 5px solid transparent; border-top: 6px solid #777; border-bottom: 0; }
  .acts { margin-left: auto; display: flex; align-items: center; gap: 7px; padding-right: 5px; }
  .dd { border: 3px solid transparent; border-top: 3px solid #000; border-bottom: 0; width: 0; flex: none; }
  .list { height: 67px; background: #fff; border: 1px solid #84878d; border-left-color: #777; }
  .cfg { height: 17px; background: #808080; display: flex; align-items: center; gap: 5px; padding-left: 3px; letter-spacing: -0.1px; }
  .cfg span { padding-top: 1px; }
  .ptabs { height: 23px; display: flex; align-items: end; gap: 2px; padding-left: 1px; border-top: 1px solid #c9cbd4; color: #44464c; }
  .ptabs span { width: 64px; height: 18px; border: 1px solid #b7b9c1; border-bottom: 0; border-radius: 4px 4px 0 0; background: linear-gradient(#e6e8ef, #cbcdd6); text-align: center; padding-top: 3px; letter-spacing: -0.1px; }
  .ptabs b { width: 83px; height: 18px; border-radius: 3px 3px 0 0; background: linear-gradient(#b4dea9, #69bd62 30%, #a0d797); text-align: center; padding-top: 3px; color: #222; letter-spacing: -0.05px; }
  .tree { flex: 1; background: #fff; border: 1px solid #84878d; display: flex; justify-content: space-between; }
  .rows { position: relative; width: 284px; padding-top: 1px; margin-top: -1px; letter-spacing: -0.1px; }
  .wires { position: absolute; left: -1px; top: 1px; width: 284px; height: 202px; }
  .row { height: 13px; display: flex; align-items: center; position: relative; }
  .row.icon { height: 16px; }
  .row .exp { width: 9px; height: 9px; flex: none; }
  .l0 { padding-left: 6px; } .l1 { padding-left: 26px; } .l2 { padding-left: 46px; } .l3 { padding-left: 80px; }
  .l1.noexp { padding-left: 43px; } .l2.noexp { padding-left: 63px; } .l3.noexp { padding-left: 80px; }
  .lab { display: flex; align-items: center; gap: 5px; height: 100%; }
  .exp + .lab { padding-left: 8px; } .row.l0 .lab { padding-left: 8px; }
  .l3 .lab { padding-left: 3px; }
  .lab.sel { background: #3399ff; width: 203px; }
  .bold { font-weight: bold; letter-spacing: -0.12px; }
  .nf { width: 16px; height: 15px; border: 1px solid #345; background: radial-gradient(circle at 80% 15%, #a8648c, #b8b070 40%, #78b078 65%, #3a8aa0); }
  .sb { width: 16px; background: #f0f0f0; display: flex; flex-direction: column; justify-content: space-between; align-items: center; padding: 7px 0 6px; position: relative; }
  .up { border: 4px solid transparent; border-bottom-color: #8a8a8a; border-top: 0; }
  .dn { border: 4px solid transparent; border-top-color: #8a8a8a; border-bottom: 0; }
  .dark.up { border-width: 0 3px 4px; border-bottom-color: #444; } .dark.dn { border-width: 4px 3px 0; border-top-color: #444; }

  .right { flex: 1; min-width: 0; display: flex; flex-direction: column; padding-left: 1px; background: #b9bbc3; }
  .vtabrow { height: 23px; flex: none; background: #eff2fb; padding-top: 2px; border-bottom: 1px solid #c4c6cf; }
  .vtab { width: 807px; height: 20px; display: flex; align-items: center; border-radius: 0 4px 0 0; background: linear-gradient(#bfe5b6 0, #a8d99f 30%, #5fb95a 38%, #a5d99c); color: #35473a; padding: 0 5px 0 4px; }
  .i3d { width: 17px; height: 17px; }
  .vtab span { margin: 2px auto 0; letter-spacing: -0.1px; }
  .vtab em { width: 14px; height: 14px; border-radius: 3px; background: #e0604a; border: 1px solid #f6c0b4; display: grid; place-items: center; margin-top: -3px; }
  .view { width: 1616px; height: 657px; background: #fff; display: block; flex: none; }
  .ax text { font: 10px 'DejaVu Sans Mono', monospace; }
  .log { flex: 1; margin-top: 3px; background: #fff; display: flex; justify-content: space-between; border-bottom: 1px solid #dfe3ee; }
  .lines { padding: 0 0 0 5px; letter-spacing: -0.1px; margin-top: -1px; }
  .lines div { height: 13px; }
  .lines div:first-child { letter-spacing: -0.18px; }
  .lines .bold { letter-spacing: -0.06px; }
  .log .sb { margin-right: 2px; }
  .thumb { position: absolute; top: 124px; width: 15px; height: 29px; border: 1px solid #979797; border-radius: 2px; background: repeating-linear-gradient(#444 0 1px, #eee 1px 3px) center/7px 9px no-repeat, linear-gradient(90deg, #f6f6f6, #cfcfd2); }

  .status { height: 27px; flex: none; display: grid; grid-template-columns: 220px 82px 106px 185px 106px 1fr; padding-left: 1179px; align-items: center; background: linear-gradient(#c6c7cc, #a0a1a6); border-top: 1px solid #d9dbe2; border-bottom: 1px solid #3a4658; }
  .status > div { height: 23px; border-left: 1px solid #e2e3e8; display: flex; align-items: center; padding-left: 3px; letter-spacing: -0.2px; }
  .status b { width: 24px; height: 22px; display: grid; place-items: center; margin-left: 3px; }
  .status .tog { background: #93b596; border: 1px solid #8a9c88; border-right-color: #d4d8b0; border-bottom-color: #d4d8b0; border-radius: 3px; }
  .s1 span { width: 37px; } .s1 b + b { margin-left: 1px; } .s1 em { width: 2px; margin-right: -1px; }
  .status .s2 { padding-left: 4px; } .s2 span { width: 34px; } .s2 svg + svg { margin-left: 8px; }
  .s4 span { width: 54px; } .s4 svg { margin-right: 8px; } .s4 .dd { margin-right: 6px; }
  .status .s6 { color: #3b3d44; padding-left: 4px; }

  .taskbar { height: 39px; flex: none; display: flex; align-items: center; position: relative; box-shadow: inset 0 1px #7fa6cf; background: linear-gradient(60deg, #ffffff00 1065px, #ffffff12 1080px 1170px, #ffffff00 1190px), linear-gradient(90deg, #0d3564, #164d8c 8%, #134f92 20%, #1263b5 40%, #1266bc 62%, #1566b8 83%, #1d63ac 88%, #1a4a80 91%, #123a68); }
  .orb { width: 40px; height: 39px; margin-left: 7px; }
  .wmp { width: 28px; height: 28px; margin: 0 20px 0 27px; }
  .tb { width: 58px; height: 39px; margin-right: 4px; display: grid; place-items: center; border: 1px solid #b9cce4; outline: 1px solid #0b2347; outline-offset: 0; border-radius: 3px; background: linear-gradient(155deg, #a3b8d4, #7593bd 45%, #3f68a0 50%, #3c6cab); }
  .tb.cur { background: linear-gradient(155deg, #d4deea, #a9bdd6 45%, #7d9bc4 50%, #a2b8d6); }
  .tb svg, .tb :global(.biglogo) { width: 32px; height: 32px; overflow: visible; }
  .tray { position: absolute; left: 1738px; top: 12px; display: flex; gap: 8px; }
  .tray svg:first-child { margin-right: 1px; }
  .clock { position: absolute; left: 1835px; width: 70px; top: 3px; text-align: center; color: #fff; font: 12px/17px 'Noto Sans', sans-serif; letter-spacing: -0.2px; }
  .peek { position: absolute; left: 1905px; top: 0; width: 14px; height: 39px; border: 1px solid #6f93ba; background: linear-gradient(150deg, #476c97, #16335c 50%); }

  .dialog { position: absolute; left: 490px; top: 270px; width: 433px; height: 560px; border: 1px solid #2c3540; border-radius: 6px; box-shadow: inset 0 0 0 1px #f4faff; background: linear-gradient(105deg, #cfe4fa00 0 240px, #a8c4e2aa 290px 380px, #cfe4fa00 440px) top/100% 30px no-repeat, linear-gradient(#cfe3f8, #c9dff7 28%, #b7d3f0 29%, #cfe5fc); padding: 0 6px 6px; }
  .dtitle { height: 28px; display: flex; align-items: center; font: 12px/16px 'Noto Sans', sans-serif; letter-spacing: -0.25px; gap: 6px; padding-left: 1px; position: relative; }
  .dtitle span { background: radial-gradient(ellipse at center, #ffffff80, #ffffff00 75%); }
  .dtitle b { position: absolute; right: -1px; top: 0; width: 47px; height: 19px; border: 1px solid #5d2a2a; border-top: 0; border-radius: 0 0 5px 5px; display: grid; place-items: center; background: linear-gradient(#e0a89c, #cf7a6c 45%, #b93a24 50%, #cf6a4e); box-shadow: inset 0 0 0 1px #ffffff70; }
  .client { height: 524px; border: 1px solid #66727f; background: #f0f0f0; padding: 10px 11px; }
  .dtabs { display: flex; align-items: end; height: 21px; padding-left: 2px; position: relative; }
  .dtabs span { height: 19px; border: 1px solid #898c95; border-bottom: 0; background: linear-gradient(#f2f2f2, #ebebeb 48%, #dcdcdc 52%, #d2d2d2); text-align: center; padding-top: 4px; width: 51px; letter-spacing: -0.12px; }
  .dtabs span:first-child { width: 58px; padding-right: 2px; } .dtabs span:last-child { width: 70px; }
  .dtabs span:nth-child(3) { padding-right: 3px; }
  .dtabs .cur { width: 79px; height: 22px; margin-bottom: -1px; background: #fff; margin-left: -1px; padding-right: 1px; position: relative; }
  .pane { height: 450px; width: 393px; border: 1px solid #898c95; background: #fff; padding: 11px 7px 0; }
  .grp { height: 88px; width: 377px; border: 1px solid #d5dfe5; border-radius: 4px; margin-bottom: 14px; padding-left: 5px; }
  .leg { height: 13px; width: max-content; margin-top: -7px; background: #fff; padding: 0 3px 0 2px; letter-spacing: -0.15px; margin-bottom: 3px; }
  .frow { display: flex; height: 20px; margin-bottom: 6px; }
  .frow label { width: 13px; padding-top: 4px; }
  .inp { width: 331px; border: 1px solid #abadb3; border-color: #abadb3 #dbdfe6 #e3e9ef #e2e3ea; padding: 1px; margin-right: 1px; background: #ff0 content-box; }
  .inp span { display: block; width: max-content; height: 14px; margin: 2px 0 0 2px; padding-top: 1px; letter-spacing: -0.05px; }
  .inp.focus { border-color: #3d7bad #a4c9e3 #b7d9ed #b5cfe7; }
  .inp.focus span { background: #3399ff; color: #fff; border-right: 1px solid #000; height: 13px; margin-top: 2px; padding-top: 0; letter-spacing: -0.25px; }
  .lk { width: 18px; height: 18px; margin-top: 1px; border: 1px solid #8a8a8a; border-radius: 3px; background: #e6e6e6; }
  .lk.dot { border: 1px dotted #000; }
  .lock { width: 16px; height: 16px; display: block; }
  .rotg { height: 91px; margin-bottom: 0; padding-left: 9px; }
  .three { display: flex; gap: 6px; margin-top: 10px; }
  .three > div { width: 115px; }
  .rb { height: 38px; width: 113px; margin: 0 1px 7px; border: 1px solid #707070; border-radius: 3px; box-shadow: inset 0 0 0 1px #fbfbfb; background: linear-gradient(#f1f1f1, #e8e8e8 48%, #d8d8d8 50%, #cfcfcf); padding-left: 37px; }
  .rot { width: 34px; height: 34px; display: block; margin-top: 1px; overflow: visible; }
  .rot text { font: italic 14px 'Liberation Serif', serif; }
  .ri { height: 20px; border: 1px solid #abadb3; border-color: #abadb3 #dbdfe6 #e3e9ef #e2e3ea; padding: 4px 2px; letter-spacing: -0.3px; }
  .btns { display: flex; gap: 8px; justify-content: flex-start; padding: 8px 0 0 80px; }
  .btns div { width: 73px; height: 21px; border: 1px solid #707070; border-radius: 3px; text-align: center; padding: 4px 2px 0 0; box-shadow: inset 0 0 0 1px #fbfbfb; background: linear-gradient(#f2f2f2, #ebebeb 48%, #dddddd 50%, #cfcfcf); letter-spacing: -0.1px; }
  .btns .def { border-color: #3c7fb1; box-shadow: inset 0 0 0 1px #35c8f5; background: linear-gradient(#e8f4fb, #dceefa 48%, #c2e1f3 50%, #b5d9ee); }
</style>
